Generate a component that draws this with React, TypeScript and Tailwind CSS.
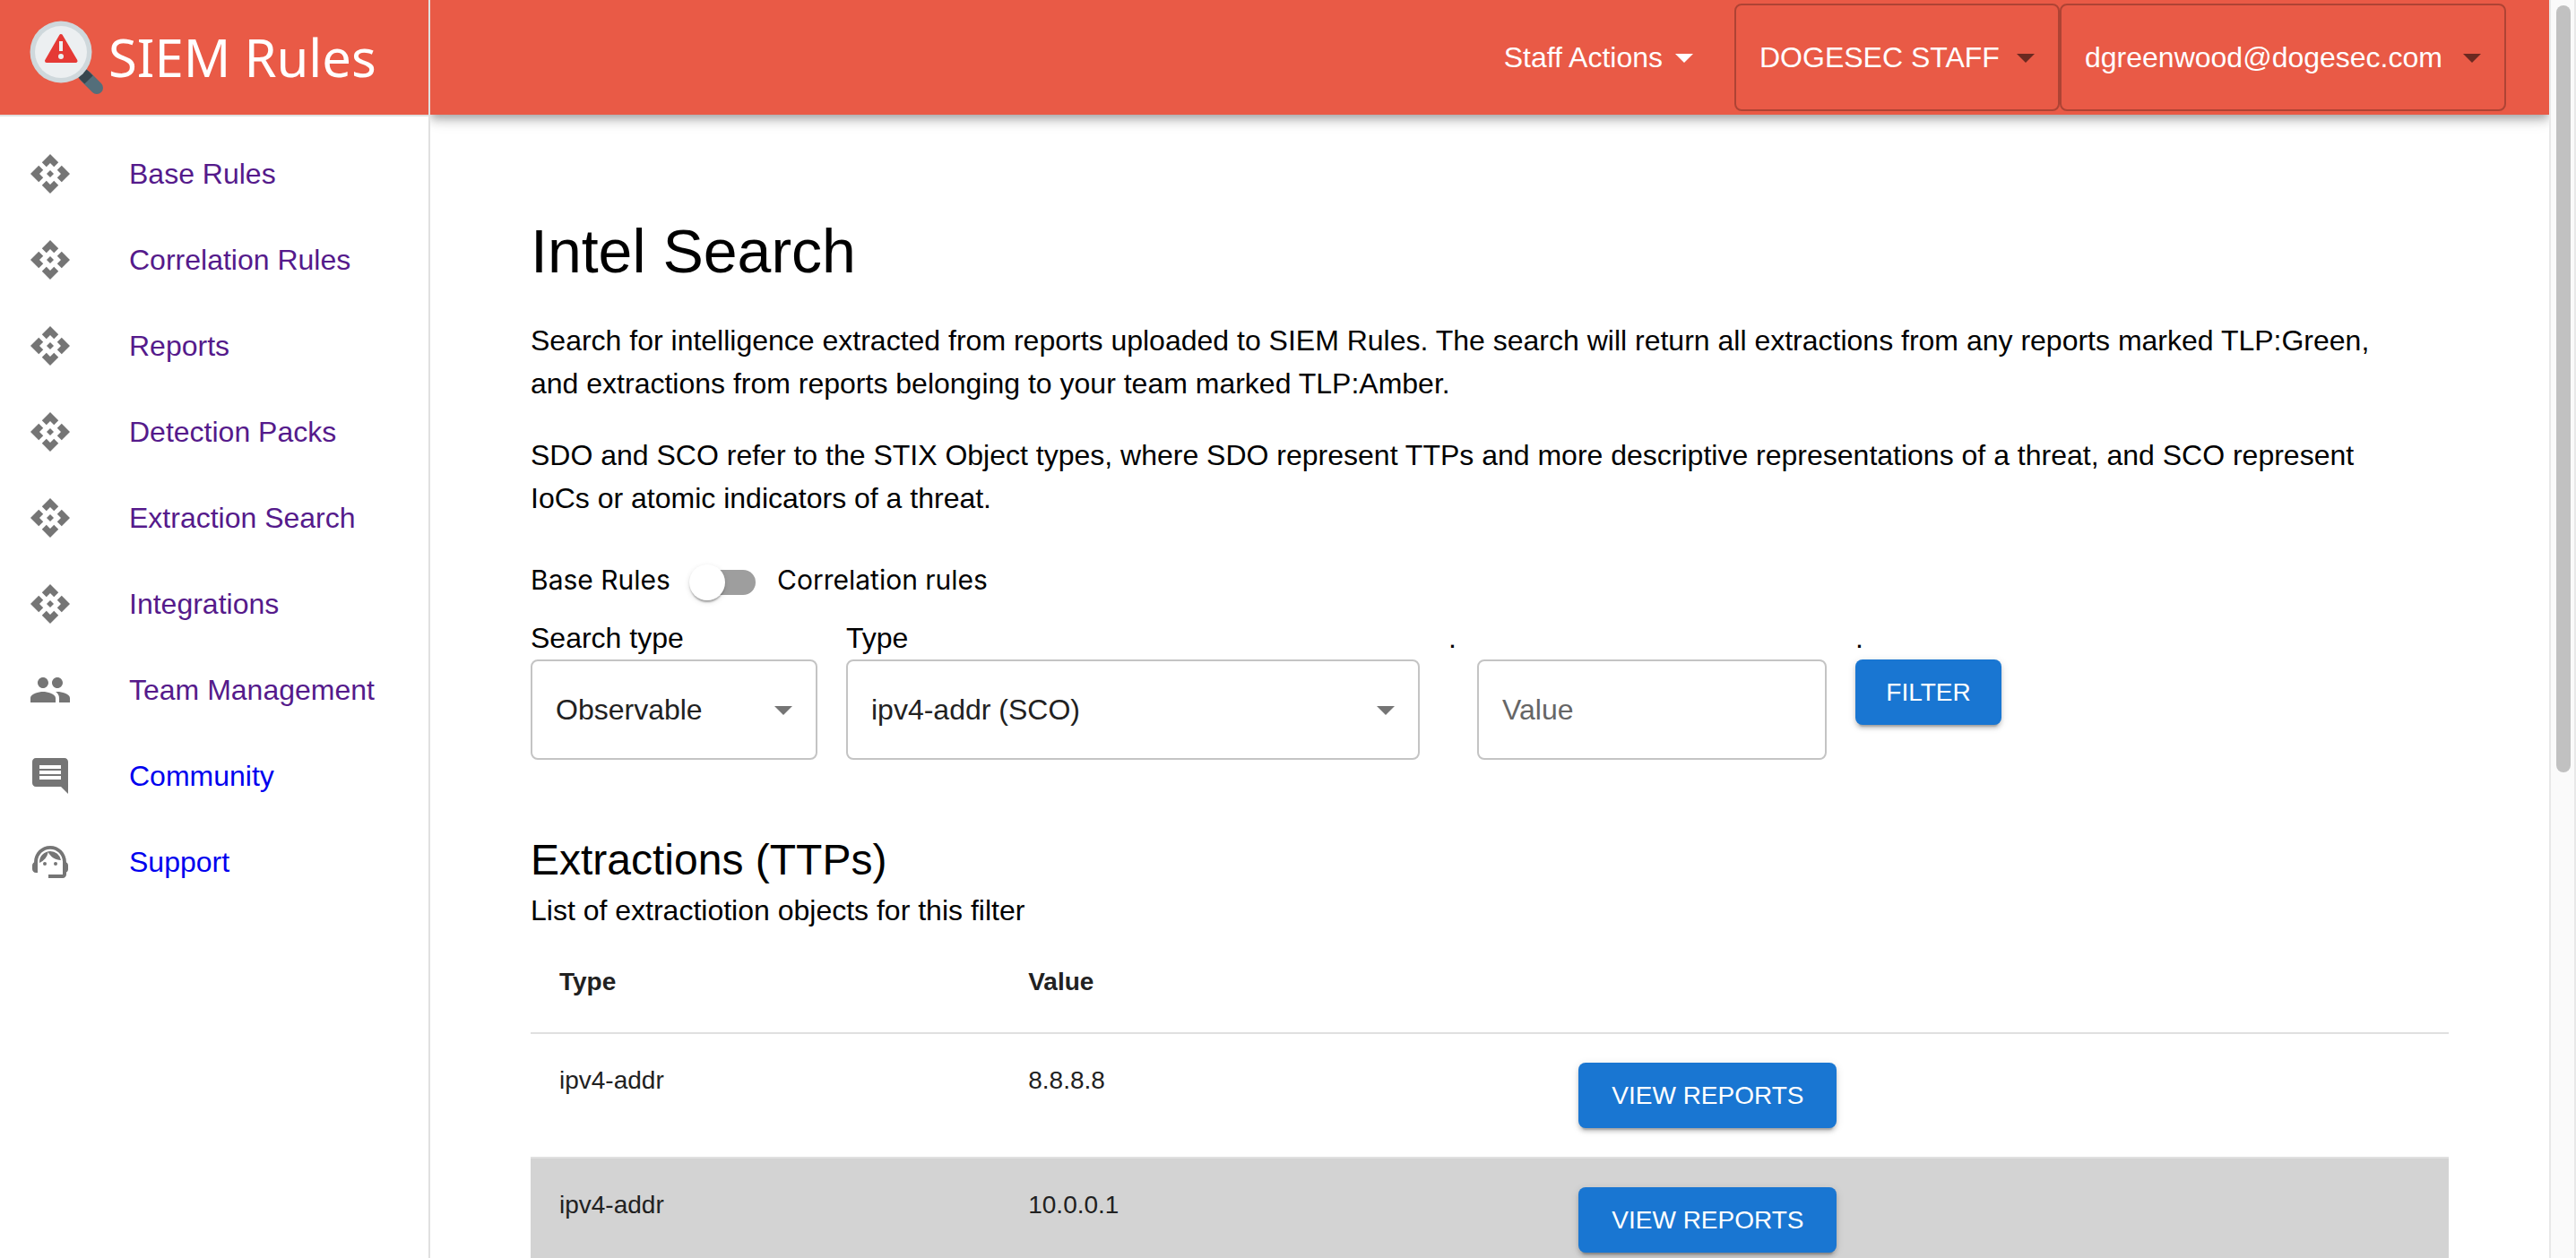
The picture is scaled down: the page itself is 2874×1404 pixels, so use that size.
import React from "react";
import { MdApi, MdPeople, MdComment, MdSupportAgent } from "react-icons/md";

const navItems = [
  { label: "Base Rules", icon: MdApi, color: "text-[#551a8b]" },
  { label: "Correlation Rules", icon: MdApi, color: "text-[#551a8b]" },
  { label: "Reports", icon: MdApi, color: "text-[#551a8b]" },
  { label: "Detection Packs", icon: MdApi, color: "text-[#551a8b]" },
  { label: "Extraction Search", icon: MdApi, color: "text-[#551a8b]" },
  { label: "Integrations", icon: MdApi, color: "text-[#551a8b]" },
  { label: "Team Management", icon: MdPeople, color: "text-[#551a8b]" },
  { label: "Community", icon: MdComment, color: "text-[#0000ee]" },
  { label: "Support", icon: MdSupportAgent, color: "text-[#0000ee]" },
];

const rows = [
  { type: "ipv4-addr", value: "8.8.8.8" },
  { type: "ipv4-addr", value: "10.0.0.1" },
];

function Caret({ className = "" }: { className?: string }) {
  return (
    <svg viewBox="0 0 24 24" fill="currentColor" aria-hidden="true" className={`size-12 shrink-0 ${className}`}>
      <path d="M7 10l5 5 5-5z" />
    </svg>
  );
}

function Logo() {
  return (
    <a href="#home" className="flex items-center gap-1 text-white" aria-label="SIEM Rules">
      <svg viewBox="0 0 84 84" className="size-[84px] shrink-0" aria-hidden="true">
        <path d="M62 63 L75 76" stroke="#546e7a" strokeWidth="14" strokeLinecap="round" />
        <path d="M58 59 L66 67" stroke="#37474f" strokeWidth="13" />
        <circle cx="35" cy="36" r="34.5" fill="#cfd8dc" />
        <circle cx="35" cy="36" r="29" fill="#eceff1" />
        <path d="M35 18 L51.500 46 L19 46Z" fill="#e53935" stroke="#e53935" strokeWidth="4" strokeLinejoin="round" />
        <path d="M35 24v11" stroke="#eceff1" strokeWidth="4" />
        <circle cx="35" cy="41" r="3" fill="#eceff1" />
      </svg>
      <span className="font-['Noto_Sans',sans-serif] text-[58px] leading-none">SIEM Rules</span>
    </a>
  );
}

function HeaderSelect({ label, value, width }: { label: string; value: string; width: string }) {
  return (
    <div className={`relative h-[120px] shrink-0 ${width}`}>
      <select
        aria-label={label}
        className="size-full appearance-none rounded-lg border-2 border-black/25 bg-transparent pl-[26px] pr-15 text-[32px] text-white"
      >
        <option>{value}</option>
      </select>
      <Caret className="pointer-events-none absolute right-[14px] top-9 text-black/54" />
    </div>
  );
}

function FieldSelect({ id, label, value, width }: { id: string; label: string; value: string; width: string }) {
  return (
    <div className={width}>
      <label htmlFor={id} className="block">{label}</label>
      <div className="relative">
        <select
          id={id}
          className="h-28 w-full appearance-none rounded-lg border-2 border-[#c4c4c4] bg-white pl-[26px] pr-16 text-[#212121]"
        >
          <option>{value}</option>
        </select>
        <Caret className="pointer-events-none absolute right-[14px] top-8 text-[#757575]" />
      </div>
    </div>
  );
}

function BlueButton({ children, width }: { children: React.ReactNode; width: string }) {
  return (
    <button
      className={`block rounded-lg bg-[#1976d2] py-3 text-center text-[28px] leading-[49px] text-white uppercase shadow-[0_6px_2px_-4px_rgba(0,0,0,0.2),0_4px_4px_0_rgba(0,0,0,0.14),0_2px_10px_0_rgba(0,0,0,0.12)] ${width}`}
    >
      {children}
    </button>
  );
}

export default function App() {
  return (
    <div className="flex h-screen overflow-hidden bg-white font-['Liberation_Sans',Arial,sans-serif] text-[32px] leading-[48px] text-black">
      <aside className="z-10 w-[480px] shrink-0 border-r-2 border-[#e0e0e0] bg-white">
        <div className="h-[130px] border-b-2 border-[#e0e0e0] bg-[#e95a46] pt-[22px] pl-[33px]">
          <Logo />
        </div>
        <nav className="pt-4">
          {navItems.map(({ label, icon: Icon, color }) => (
            <a key={label} href="#nav" className={`flex h-24 items-center gap-16 px-8 ${color}`}>
              <Icon className="size-12 shrink-0 text-[#757575]" />
              <span>{label}</span>
            </a>
          ))}
        </nav>
      </aside>

      <div className="flex min-w-0 flex-1 flex-col">
        <header className="flex h-32 shrink-0 items-center justify-end bg-[#e95a46] pr-12 text-white shadow-[0_4px_8px_-2px_rgba(0,0,0,0.2),0_8px_10px_0_rgba(0,0,0,0.14),0_2px_20px_0_rgba(0,0,0,0.12)]">
          <button className="mr-8 flex items-center">
            Staff Actions
            <Caret />
          </button>
          <HeaderSelect label="Team" value="DOGESEC STAFF" width="w-[363px]" />
          <HeaderSelect label="Account" value="dgreenwood@dogesec.com" width="w-[498px]" />
        </header>

        <main className="px-28 pt-[110px]">
          <h1 className="text-[68px] leading-[84px]">Intel Search</h1>
          <p className="mt-[34px] max-w-[2100px]">
            Search for intelligence extracted from reports uploaded to SIEM Rules. The search will return all extractions
            from any reports marked TLP:Green, and extractions from reports belonging to your team marked TLP:Amber.
          </p>
          <p className="mt-8 max-w-[2100px]">
            SDO and SCO refer to the STIX Object types, where SDO represent TTPs and more descriptive representations of a
            threat, and SCO represent IoCs or atomic indicators of a threat.
          </p>

          <label className="mt-8 flex h-[76px] w-fit items-start font-['Inter',sans-serif] text-[30px]">
            <span className="w-[159px] pt-[11px] whitespace-nowrap">Base Rules</span>
            <span className="relative flex h-[76px] w-[116px] items-center px-6">
              <input type="checkbox" role="switch" aria-label="Correlation rules" className="peer h-7 w-full appearance-none rounded-full bg-[#9e9e9e]" />
              <span className="absolute top-[18px] left-[18px] size-10 rounded-full bg-white shadow-[0_4px_2px_-2px_rgba(0,0,0,0.2),0_2px_2px_0_rgba(0,0,0,0.14),0_2px_6px_0_rgba(0,0,0,0.12)] peer-checked:left-[58px]" />
            </span>
            <span className="pt-[11px]">Correlation rules</span>
          </label>

          <form className="flex items-start gap-8" onSubmit={(e) => e.preventDefault()}>
            <FieldSelect id="search-type" label="Search type" value="Observable" width="w-80" />
            <FieldSelect id="type" label="Type" value="ipv4-addr (SCO)" width="w-160" />
            <div className="w-[422px]">
              <label htmlFor="value" className="block">.</label>
              <div className="pl-8">
                <input
                  id="value"
                  placeholder="Value"
                  className="h-28 w-full rounded-lg border-2 border-[#c4c4c4] px-[26px] text-[#212121] placeholder:text-[#666666]"
                />
              </div>
            </div>
            <div>
              <div>.</div>
              <BlueButton width="w-[163px]">Filter</BlueButton>
            </div>
          </form>

          <h2 className="mt-20 text-5xl leading-[64px]">Extractions (TTPs)</h2>
          <p>List of extractiotion objects for this filter</p>

          <table className="w-full table-fixed text-left text-[28px] leading-10 text-[#212121]">
            <colgroup>
              <col className="w-[24.45%]" />
              <col className="w-[28.7%]" />
              <col />
            </colgroup>
            <thead>
              <tr className="border-b-2 border-[#e0e0e0] leading-[48px]">
                <th className="p-8 font-bold">Type</th>
                <th className="p-8 font-bold">Value</th>
                <th className="p-8" />
              </tr>
            </thead>
            <tbody>
              {rows.map((row) => (
                <tr key={row.value} className="border-b-2 border-[#e0e0e0] align-top even:bg-[#d3d3d3]">
                  <td className="p-8">{row.type}</td>
                  <td className="p-8">{row.value}</td>
                  <td className="p-8">
                    <BlueButton width="w-72">View Reports</BlueButton>
                  </td>
                </tr>
              ))}
            </tbody>
          </table>
        </main>
      </div>

      <div aria-hidden="true" className="z-10 w-[30px] shrink-0 border-x-2 border-[#e8e8e8] bg-[#fafafa] px-1.5 pt-1.5">
        <div className="h-[61vh] w-4 rounded-full bg-[#c1c1c1]" />
      </div>
    </div>
  );
}
